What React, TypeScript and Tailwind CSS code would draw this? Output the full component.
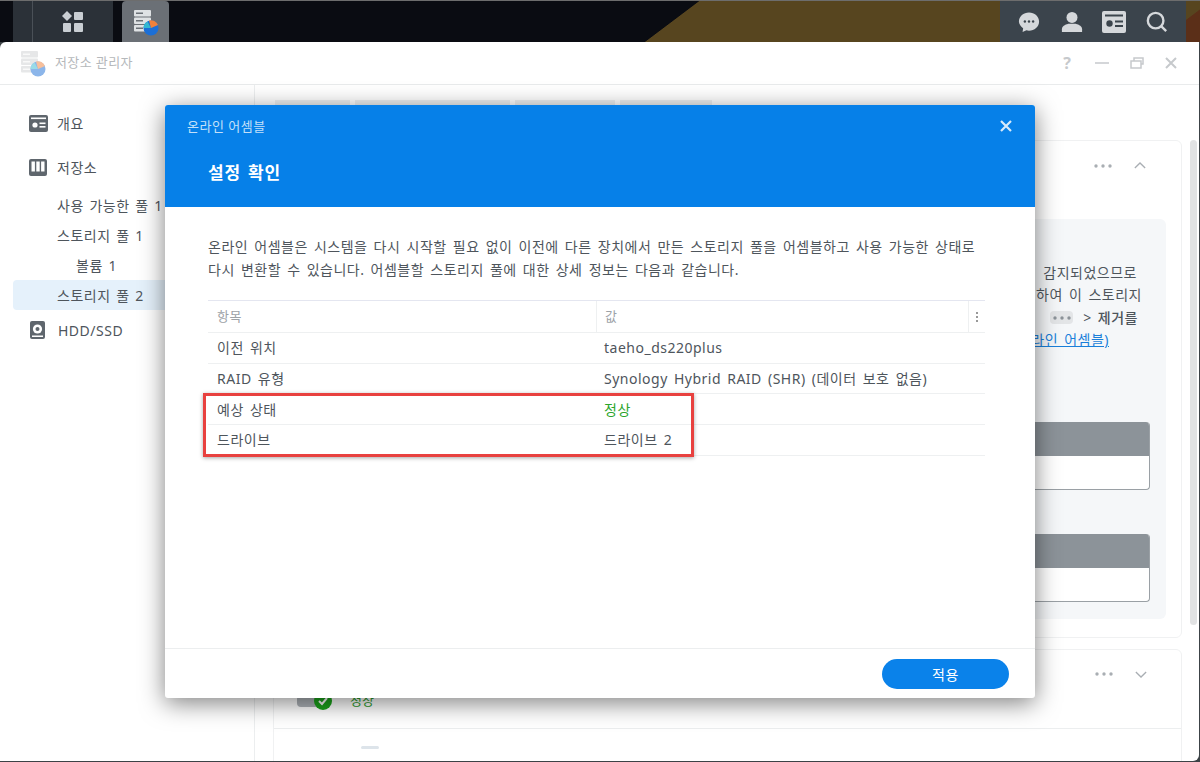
const font = { fontFamily: '"Noto Sans", "Noto Sans CJK KR", sans-serif' };

function AppGridIcon() {
  return (
    <svg width="24" height="22" viewBox="0 0 24 22" fill="#c9ced3">
      <path d="M6 0l5 5-5 5-5-5z" />
      <rect x="13" y="1" width="9" height="8" rx="1" />
      <rect x="2" y="12" width="8" height="9" rx="1" />
      <rect x="13" y="12" width="9" height="9" rx="1" />
    </svg>
  );
}

function StorageIcon({ faded = false }: { faded?: boolean }) {
  const body = faded ? "#cfd1d3" : "#dfe2e4";
  const slot = faded ? "#f4f4f4" : "#6b7076";
  return (
    <svg width="26" height="30" viewBox="0 0 26 30" opacity={faded ? 0.5 : 1}>
      <rect x="1" y="3" width="17" height="6.500" rx="1" fill={body} />
      <rect x="1" y="10.500" width="17" height="6.500" rx="1" fill={body} />
      <rect x="1" y="18" width="17" height="6.500" rx="1" fill={body} />
      <rect x="3" y="5.500" width="7" height="1.500" fill={slot} />
      <rect x="3" y="13" width="7" height="1.500" fill={slot} />
      <rect x="3" y="20.500" width="7" height="1.500" fill={slot} />
      <circle cx="18" cy="21" r="7.500" fill="#1c6fd6" />
      <path d="M18 21h-7.500a7.500 7.500 0 0 1 4-6.600z" fill="#33b8d0" />
      <path d="M18 21l-2-7.500a7.500 7.500 0 0 1 9 4.500z" fill="#f0813a" />
    </svg>
  );
}

function OverviewIcon() {
  return (
    <svg width="19" height="17" viewBox="0 0 19 17">
      <rect width="19" height="17" rx="2" fill="#5f666d" />
      <rect x="2" y="2.500" width="15" height="1.600" fill="#fff" />
      <circle cx="6" cy="10" r="2.600" fill="#fff" />
      <rect x="10.500" y="7.500" width="6" height="1.600" fill="#fff" />
      <rect x="10.500" y="11" width="6" height="1.600" fill="#fff" />
    </svg>
  );
}

function ColumnsIcon() {
  return (
    <svg width="18" height="17" viewBox="0 0 18 17">
      <rect width="18" height="17" rx="2" fill="#5f666d" />
      <rect x="2.500" y="2.500" width="3.400" height="10" fill="#fff" />
      <rect x="7.300" y="2.500" width="3.400" height="10" fill="#fff" />
      <rect x="12.100" y="2.500" width="3.400" height="10" fill="#fff" />
    </svg>
  );
}

function DiskIcon() {
  return (
    <svg width="15" height="18" viewBox="0 0 15 18">
      <rect width="15" height="18" rx="2" fill="#5f666d" />
      <circle cx="7.500" cy="8" r="4.600" fill="#fff" />
      <circle cx="7.500" cy="8" r="2" fill="#5f666d" />
      <rect x="2" y="14.500" width="11" height="1.500" fill="#fff" />
    </svg>
  );
}

function NavRow({ label, icon, indent = "pl-[44px]", active = false, className = "" }: { label: string; icon?: React.ReactNode; indent?: string; active?: boolean; className?: string }) {
  return (
    <div className={`flex h-[30px] items-center rounded-l ${indent} ${active ? "bg-[#e5f1fb]" : ""} ${className}`}>
      {icon && <span className="flex w-[28px] shrink-0 items-center">{icon}</span>}
      <span className="whitespace-nowrap text-[14px] tracking-[0.5px] text-[#4e555c] [word-spacing:1.500px]">{label}</span>
    </div>
  );
}

function GrayTable({ className = "" }: { className?: string }) {
  return (
    <div className={`mr-[16px] h-[68px] overflow-hidden rounded border-b border-r border-[#9aa0a5] bg-white ${className}`}>
      <div className="h-[34px] bg-[#8c9399]" />
    </div>
  );
}

function Dots({ color = "#a9aeb3" }: { color?: string }) {
  return (
    <svg width="18" height="4" viewBox="0 0 18 4" fill={color}>
      <circle cx="2" cy="2" r="1.700" />
      <circle cx="9" cy="2" r="1.700" />
      <circle cx="16" cy="2" r="1.700" />
    </svg>
  );
}

const rows = [
  { name: "이전 위치", value: "taeho_ds220plus" },
  { name: "RAID 유형", value: "Synology Hybrid RAID (SHR) (데이터 보호 없음)" },
  { name: "예상 상태", value: "정상", green: true },
  { name: "드라이브", value: "드라이브 2" },
];

export default function App() {
  return (
    <div style={font} className="relative flex h-[762px] w-[1200px] flex-col overflow-hidden bg-[#3c4246]">
      {/* desktop taskbar */}
      <div className="flex h-[42px] shrink-0 border-t border-[#6d6d6d] bg-[linear-gradient(143deg,#0a0c12_0%,#0a0c12_55.700%,#57451f_55.800%,#57451f_96.500%,#5b2f18_96.600%,#5b2f18_100%)]">
        <div className="ml-[13px] flex w-[100px] bg-[#2b3138]">
          <div className="w-[20px] border-r border-[#4a5057]" />
          <div className="flex flex-1 items-center justify-center pr-[1px]">
            <AppGridIcon />
          </div>
        </div>
        <div className="ml-[9px] flex w-[47px] items-center justify-center rounded-t-sm bg-[#6b7076]">
          <StorageIcon />
        </div>
        <div className="ml-auto mr-[14px] flex w-[186px] items-center bg-[#3b444c] pl-[18px]">
          <svg width="22" height="22" viewBox="0 0 24 24" fill="#d5d8db">
            <path d="M12 1.500c6 0 11 4.300 11 10s-5 10-11 10c-1 0-2-.1-2.800-.4L5 23l.6-4.300C2.800 16.800 1 14.300 1 11.500c0-5.700 5-10 11-10z" />
            <circle cx="7.500" cy="11.500" r="1.300" fill="#3b444c" />
            <circle cx="12" cy="11.500" r="1.300" fill="#3b444c" />
            <circle cx="16.500" cy="11.500" r="1.300" fill="#3b444c" />
          </svg>
          <svg className="ml-[21px]" width="22" height="22" viewBox="0 0 22 24" fill="#d5d8db">
            <circle cx="11" cy="7" r="6" />
            <path d="M0 23v-3c0-3 3-5 7-6h8c4 1 7 3 7 6v3z" />
          </svg>
          <svg className="ml-[19px]" width="24" height="22" viewBox="0 0 24 22">
            <rect width="24" height="22" rx="2" fill="#d5d8db" />
            <rect x="3" y="3.500" width="18" height="2" fill="#3b444c" />
            <circle cx="7.500" cy="12.500" r="3.200" fill="#3b444c" />
            <rect x="13" y="9.500" width="8" height="2" fill="#3b444c" />
            <rect x="13" y="14" width="8" height="2" fill="#3b444c" />
          </svg>
          <svg className="ml-[20px]" width="22" height="22" viewBox="0 0 24 24" fill="none" stroke="#d5d8db" strokeWidth="2.600">
            <circle cx="10.500" cy="10.500" r="8.500" />
            <path d="M16.500 16.500L22 22" />
          </svg>
        </div>
      </div>

      {/* storage manager window */}
      <div className="mr-px flex h-[719px] shrink-0 flex-col overflow-hidden rounded-tl-md rounded-br-md bg-white">
        <div className="flex h-[43px] shrink-0 items-center border-b border-[#e9ebec] pl-[20px]">
          <StorageIcon faded />
          <span className="ml-[9px] text-[13px] tracking-[0.4px] text-[#b5b8bb]">저장소 관리자</span>
          <div className="ml-auto mr-[22px] flex items-center gap-[21px] text-[#c6c9cc]">
            <span className="flex w-[14px] justify-center text-[16px] font-bold">?</span>
            <svg width="14" height="14" viewBox="0 0 14 14" stroke="#c6c9cc" strokeWidth="1.500">
              <path d="M0 7h14" />
            </svg>
            <svg width="14" height="14" viewBox="0 0 14 14" fill="none" stroke="#c6c9cc" strokeWidth="1.500">
              <rect x="1" y="5" width="10" height="7" />
              <path d="M4 5V2h9v6h-2" />
            </svg>
            <svg width="12" height="12" viewBox="0 0 12 12" stroke="#c6c9cc" strokeWidth="2">
              <path d="M1 1l10 10M11 1L1 11" />
            </svg>
          </div>
        </div>

        <div className="flex min-h-0 flex-1">
          {/* sidebar */}
          <div className="w-[255px] shrink-0 border-r border-[#eceeef] pt-[23px]">
            <NavRow label="개요" icon={<OverviewIcon />} indent="pl-[29px]" />
            <NavRow label="저장소" icon={<ColumnsIcon />} indent="pl-[29px]" className="mt-[14px]" />
            <div className="mt-[8px] pl-[13px]">
              <NavRow label="사용 가능한 풀 1" />
              <NavRow label="스토리지 풀 1" />
              <NavRow label="볼륨 1" indent="pl-[63px]" />
              <NavRow label="스토리지 풀 2" active />
            </div>
            <NavRow label="HDD/SSD" icon={<DiskIcon />} indent="pl-[30px]" className="mt-[5px]" />
          </div>

          {/* main pane, mostly hidden by the dialog */}
          <div className="flex min-w-0 flex-1">
            <div className="min-w-0 flex-1 pl-[18px] pt-[15px]">
              <div className="ml-[2px] flex h-[6px] gap-[5px]">
                <div className="w-[75px] bg-[#eef0f1]" />
                <div className="w-[155px] bg-[#eef0f1]" />
                <div className="w-[100px] bg-[#eef0f1]" />
                <div className="w-[92px] bg-[#eef0f1]" />
              </div>
              <div className="relative mt-[34px] h-[498px] rounded-md border border-[#f0f1f2] pl-[16px] pr-[15px] pt-[78px]">
                <div className="absolute right-[35px] top-[21px] flex items-center gap-[22px]">
                  <Dots />
                  <svg width="12" height="7" viewBox="0 0 14 8" fill="none" stroke="#a9aeb3" strokeWidth="1.500">
                    <path d="M1 7l6-6 6 6" />
                  </svg>
                </div>
                <div className="h-[400px] rounded-md bg-[#f5f7f9] pt-[43px] text-[14px] leading-[22.300px] tracking-[0.5px] text-[#4e555c] [word-spacing:2px]">
                  <div className="flex flex-col items-end whitespace-nowrap">
                    <p className="mr-[29px]">감지되었으므로</p>
                    <p className="mr-[24px]">하여 이 스토리지</p>
                    <p className="mr-[28px] flex items-center">
                      <span className="mr-[10px] flex h-[13px] w-[23px] items-center justify-center rounded-sm bg-[#e3e5e7]">
                        <Dots color="#8c9399" />
                      </span>
                      &gt; <span className="ml-[6px] font-medium">제거를</span>
                    </p>
                    <p className="mr-[57px] text-[#1a7fd9] underline">온라인 어셈블)</p>
                  </div>
                  <GrayTable className="mt-[71px]" />
                  <GrayTable className="mt-[44px]" />
                </div>
              </div>
              <div className="mt-[11px] h-[130px] rounded-md border border-[#f0f1f2]">
                <div className="flex h-[79px] items-center border-b border-[#eceeef] pl-[23px] pt-[24px]">
                  <span className="-mr-[7px] h-[12px] w-[24px] rounded bg-[#aeb3b8]" />
                  <svg className="relative" width="18" height="18" viewBox="0 0 18 18">
                    <circle cx="9" cy="9" r="9" fill="#1ba31b" />
                    <path d="M5 9l3 3 5-6" fill="none" stroke="#fff" strokeWidth="2" />
                  </svg>
                  <span className="ml-[18px] text-[13px] text-[#2b9a2b]">정상</span>
                  <div className="ml-auto mr-[34px] flex -translate-y-[27px] items-center gap-[22px]">
                    <Dots />
                    <svg width="12" height="7" viewBox="0 0 14 8" fill="none" stroke="#a9aeb3" strokeWidth="1.500">
                      <path d="M1 1l6 6 6-6" />
                    </svg>
                  </div>
                </div>
                <div className="ml-[87px] mt-[17px] h-[3px] w-[18px] rounded-full bg-[#dde4ea]" />
              </div>
            </div>
            <div className="ml-[8px] mr-[2px] mt-[55px] h-[485px] w-[7px] shrink-0 rounded bg-[#e1e2e3]" />
          </div>
        </div>
      </div>

      {/* online assemble dialog */}
      <div className="absolute left-[165px] top-[105px] flex h-[593px] w-[870px] flex-col overflow-hidden rounded-[3px] bg-white shadow-[0_5px_24px_rgba(0,0,0,0.5)]">
        <div className="h-[102px] shrink-0 bg-[#0680e8] pl-[22px] pt-[12px]">
          <div className="flex items-center justify-between pr-[23px]">
            <span className="text-[13px] leading-[18px] tracking-[0.5px] text-[#c4e0f9]">온라인 어셈블</span>
            <svg width="12" height="12" viewBox="0 0 12 12" stroke="#d7eafb" strokeWidth="2.200">
              <path d="M1 1l10 10M11 1L1 11" />
            </svg>
          </div>
          <h1 className="ml-[21px] mt-[26px] text-[17px] font-bold leading-[24px] tracking-[0.8px] text-white [word-spacing:2px]">설정 확인</h1>
        </div>
        <div className="flex-1 px-[43px] pt-[28px]">
          <p className="w-[790px] whitespace-nowrap text-[14px] leading-[23px] tracking-[0.5px] text-[#4e555c] [word-spacing:2px]">
            온라인 어셈블은 시스템을 다시 시작할 필요 없이 이전에 다른 장치에서 만든 스토리지 풀을 어셈블하고 사용 가능한 상태로
            <br />
            다시 변환할 수 있습니다. 어셈블할 스토리지 풀에 대한 상세 정보는 다음과 같습니다.
          </p>
          <div className="mt-[19px] w-[777px] border-t border-[#e4e6f0]">
            <div className="flex h-[32px] items-center border-b border-[#eef0f1] text-[13px] tracking-[0.5px] text-[#9da2a7]">
              <span className="w-[388px] pl-[9px]">항목</span>
              <span className="flex h-full flex-1 items-center border-l border-[#eef0f1] pl-[8px]">값</span>
              <span className="flex h-full w-[17px] flex-col items-center justify-center gap-[2px] border-l border-[#eef0f1]">
                <i className="h-[2px] w-[2px] rounded-full bg-[#777]" />
                <i className="h-[2px] w-[2px] rounded-full bg-[#777]" />
                <i className="h-[2px] w-[2px] rounded-full bg-[#777]" />
              </span>
            </div>
            {rows.map((row) => (
              <div key={row.name} className="flex h-[30.700px] items-center border-b border-[#eef0f1] text-[14px] tracking-[0.5px] text-[#4e555c] [word-spacing:2px]">
                <span className="w-[388px] pl-[9px]">{row.name}</span>
                <span className={`pl-[8px] ${row.green ? "text-[#2ba52b]" : ""}`}>{row.value}</span>
              </div>
            ))}
          </div>
        </div>
        <div className="flex h-[50px] shrink-0 items-start justify-end border-t border-[#eceeef] pr-[26px] pt-[10px]">
          <button className="h-[30px] w-[127px] rounded-full bg-[#0a82ea] text-[14px] tracking-[0.5px] text-white">적용</button>
        </div>
      </div>

      {/* red highlight drawn on the screenshot */}
      <div className="absolute left-[203px] top-[393px] h-[64px] w-[491px] border-[3px] border-[#e8413f] shadow-[0_1px_4px_rgba(0,0,0,0.35)]" />
    </div>
  );
}
